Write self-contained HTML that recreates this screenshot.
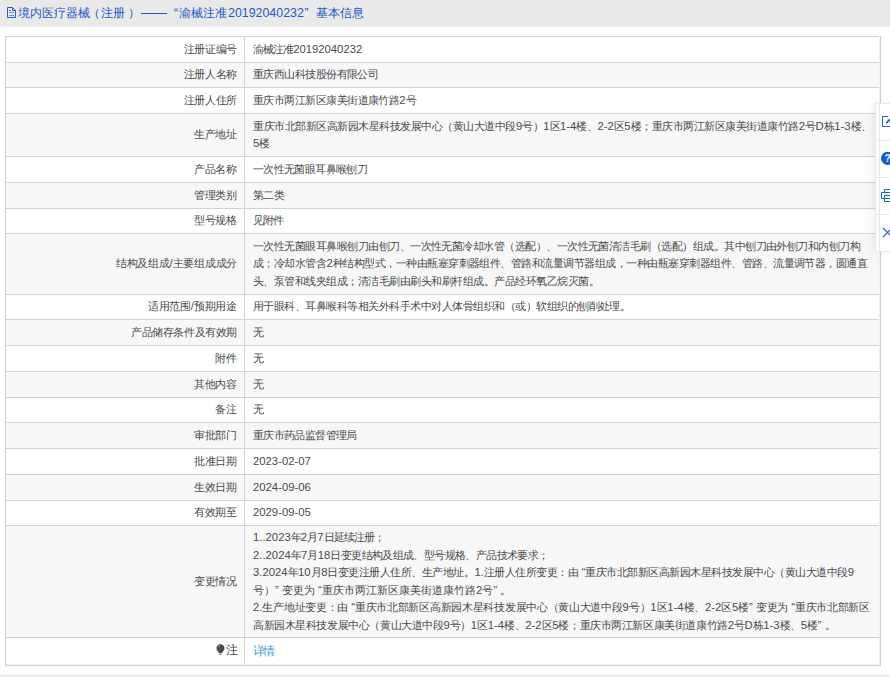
<!DOCTYPE html>
<html><head><meta charset="utf-8">
<style>
*{margin:0;padding:0;box-sizing:border-box}
html,body{width:890px;height:677px;overflow:hidden;background:#fff}
body{position:relative;font-family:"Liberation Sans",sans-serif;font-size:11px;color:#4a4a4a}
b{display:inline-block;width:var(--w);font-weight:normal;text-align:left;overflow:visible}
.hdr{position:absolute;left:0;top:0;width:890px;height:26px;background:#e9e9e9}
.hdr2{position:absolute;left:0;top:26px;width:890px;height:1px;background:#eceef6}
.ht{position:absolute;left:0;top:5px;height:16px;line-height:16px;font-size:12px;color:#1a58c8;white-space:nowrap;--w:12px}
.ht span{position:absolute;top:0}
.hi{position:absolute;left:0;top:0}
.tbl{position:absolute;left:5px;top:36px;width:876px;height:630px;border:1px solid #cfcfcf;border-top:0}
.r{position:absolute;left:0;width:873px;border-top:1px solid #d2d2d2;background:#fff}
.r.g{background:linear-gradient(to right,#fff 1px,#f7f7f7 1px)}
.l{position:absolute;left:0;top:0;width:239px;height:100%;border-right:1px solid #d2d2d2;display:flex;align-items:center;justify-content:flex-end;padding-right:7px;white-space:nowrap;line-height:17.5px}
.v{position:absolute;left:239px;top:0;width:640px;height:100%;display:flex;align-items:center;padding-left:8px;white-space:nowrap;line-height:17.5px}
.ln{display:block;white-space:nowrap;height:17.5px}
.a{font-size:11.3px}
.link{color:#3d94f6;font-size:12px}
.bulb{display:inline-block;margin-right:1px;vertical-align:0px}
.bar{position:absolute;left:0;top:675px;width:890px;height:2px;background:linear-gradient(#e8e8e8 1px,#efefef 1px)}
.tb{position:absolute;left:875px;top:103px;width:25px;height:149px;background:#fff;border:1px solid #e5e8f1;box-shadow:-4px 0 8px rgba(0,0,0,0.05)}
.tbs{position:absolute;left:860px;top:100px}
</style></head><body>
<div class="hdr"></div><div class="hdr2"></div>
<svg class="hi" width="24" height="24" viewBox="0 0 24 24"><g fill="none" stroke="#1f5fcc" stroke-width="1"><path d="M7.5 7.5H12.5L15.5 10.5V17.5H7.5Z"/><path d="M12.5 7.5V10.5H15.5"/><path d="M9 10.5H11" stroke="#3a6fd2"/><path d="M9 12.5H14M9 15.5H14" stroke="#7c8fd6"/></g></svg>
<div class="ht"><span id="H0" style="left:18px"><b>境</b><b>内</b><b>医</b><b>疗</b><b>器</b><b>械</b></span><span id="H1a" style="left:88px"><b>（</b></span><span id="H1b" style="left:101px"><b>注</b><b>册</b></span><span id="H1c" style="left:128px"><b>）</b></span><span id="H3a" style="left:174px">“</span><span id="H3b" style="left:179px"><b>渝</b><b>械</b><b>注</b><b>准</b></span><span id="H3c" style="left:228px;font-size:12.4px">20192040232</span><span id="H3d" style="left:304.5px">”</span><span id="H4" style="left:316px"><b>基</b><b>本</b><b>信</b><b>息</b></span></div><div style="position:absolute;left:141px;top:13px;width:26px;height:1px;background:#1a58c8"></div>
<div class="tbl">
<div class="r" style="top:0px;height:26px"><div class="l"><span class="lb" id="L0" style="--w:10.700px"><b>注</b><b>册</b><b>证</b><b>编</b><b>号</b></span></div><div class="v"><div><span class="ln" id="V0_0" style="--w:10.043px"><b>渝</b><b>械</b><b>注</b><b>准</b><span class="a">20192040232</span></span></div></div></div>
<div class="r g" style="top:26px;height:25px"><div class="l"><span class="lb" id="L1" style="--w:10.700px"><b>注</b><b>册</b><b>人</b><b>名</b><b>称</b></span></div><div class="v"><div><span class="ln" id="V1_0" style="--w:10.448px"><b>重</b><b>庆</b><b>西</b><b>山</b><b>科</b><b>技</b><b>股</b><b>份</b><b>有</b><b>限</b><b>公</b><b>司</b></span></div></div></div>
<div class="r" style="top:51px;height:26px"><div class="l"><span class="lb" id="L2" style="--w:10.700px"><b>注</b><b>册</b><b>人</b><b>住</b><b>所</b></span></div><div class="v"><div><span class="ln" id="V2_0" style="--w:10.459px"><b>重</b><b>庆</b><b>市</b><b>两</b><b>江</b><b>新</b><b>区</b><b>康</b><b>美</b><b>街</b><b>道</b><b>康</b><b>竹</b><b>路</b><span class="a">2</span><b>号</b></span></div></div></div>
<div class="r g" style="top:77px;height:43px"><div class="l"><span class="lb" id="L3" style="--w:10.843px"><b>生</b><b>产</b><b>地</b><b>址</b></span></div><div class="v"><div><span class="ln" id="V3_0" style="--w:10.516px"><b>重</b><b>庆</b><b>市</b><b>北</b><b>部</b><b>新</b><b>区</b><b>高</b><b>新</b><b>园</b><b>木</b><b>星</b><b>科</b><b>技</b><b>发</b><b>展</b><b>中</b><b>心</b><b>（</b><b>黄</b><b>山</b><b>大</b><b>道</b><b>中</b><b>段</b><span class="a">9</span><b>号</b><b>）</b><span class="a">1</span><b>区</b><span class="a">1-4</span><b>楼</b><b>、</b><span class="a">2-2</span><b>区</b><span class="a">5</span><b>楼</b><b>；</b><b>重</b><b>庆</b><b>市</b><b>两</b><b>江</b><b>新</b><b>区</b><b>康</b><b>美</b><b>街</b><b>道</b><b>康</b><b>竹</b><b>路</b><span class="a">2</span><b>号</b><span class="a">D</span><b>栋</b><span class="a">1-3</span><b>楼</b><b>、</b></span><span class="ln" id="V3_1" style="--w:16.100px"><span class="a">5</span><b>楼</b></span></div></div></div>
<div class="r" style="top:120px;height:26px"><div class="l"><span class="lb" id="L4" style="--w:10.843px"><b>产</b><b>品</b><b>名</b><b>称</b></span></div><div class="v"><div><span class="ln" id="V4_0" style="--w:10.367px"><b>一</b><b>次</b><b>性</b><b>无</b><b>菌</b><b>眼</b><b>耳</b><b>鼻</b><b>喉</b><b>刨</b><b>刀</b></span></div></div></div>
<div class="r g" style="top:146px;height:26px"><div class="l"><span class="lb" id="L5" style="--w:10.843px"><b>管</b><b>理</b><b>类</b><b>别</b></span></div><div class="v"><div><span class="ln" id="V5_0" style="--w:10.260px"><b>第</b><b>二</b><b>类</b></span></div></div></div>
<div class="r" style="top:172px;height:25px"><div class="l"><span class="lb" id="L6" style="--w:10.843px"><b>型</b><b>号</b><b>规</b><b>格</b></span></div><div class="v"><div><span class="ln" id="V6_0" style="--w:10.020px"><b>见</b><b>附</b><b>件</b></span></div></div></div>
<div class="r g" style="top:197px;height:61px"><div class="l"><span class="lb" id="L7" style="--w:10.748px"><b>结</b><b>构</b><b>及</b><b>组</b><b>成</b><span class="a">/</span><b>主</b><b>要</b><b>组</b><b>成</b><b>成</b><b>分</b></span></div><div class="v"><div><span class="ln" id="V7_0" style="--w:10.476px"><b>一</b><b>次</b><b>性</b><b>无</b><b>菌</b><b>眼</b><b>耳</b><b>鼻</b><b>喉</b><b>刨</b><b>刀</b><b>由</b><b>刨</b><b>刀</b><b>、</b><b>一</b><b>次</b><b>性</b><b>无</b><b>菌</b><b>冷</b><b>却</b><b>水</b><b>管</b><b>（</b><b>选</b><b>配</b><b>）</b><b>、</b><b>一</b><b>次</b><b>性</b><b>无</b><b>菌</b><b>清</b><b>洁</b><b>毛</b><b>刷</b><b>（</b><b>选</b><b>配</b><b>）</b><b>组</b><b>成</b><b>。</b><b>其</b><b>中</b><b>刨</b><b>刀</b><b>由</b><b>外</b><b>刨</b><b>刀</b><b>和</b><b>内</b><b>刨</b><b>刀</b><b>构</b></span><span class="ln" id="V7_1" style="--w:10.490px"><b>成</b><b>；</b><b>冷</b><b>却</b><b>水</b><b>管</b><b>含</b><span class="a">2</span><b>种</b><b>结</b><b>构</b><b>型</b><b>式</b><b>，</b><b>一</b><b>种</b><b>由</b><b>瓶</b><b>塞</b><b>穿</b><b>刺</b><b>器</b><b>组</b><b>件</b><b>、</b><b>管</b><b>路</b><b>和</b><b>流</b><b>量</b><b>调</b><b>节</b><b>器</b><b>组</b><b>成</b><b>，</b><b>一</b><b>种</b><b>由</b><b>瓶</b><b>塞</b><b>穿</b><b>刺</b><b>器</b><b>组</b><b>件</b><b>、</b><b>管</b><b>路</b><b>、</b><b>流</b><b>量</b><b>调</b><b>节</b><b>器</b><b>，</b><b>圆</b><b>通</b><b>直</b></span><span class="ln" id="V7_2" style="--w:10.488px"><b>头</b><b>、</b><b>泵</b><b>管</b><b>和</b><b>线</b><b>夹</b><b>组</b><b>成</b><b>；</b><b>清</b><b>洁</b><b>毛</b><b>刷</b><b>由</b><b>刷</b><b>头</b><b>和</b><b>刷</b><b>杆</b><b>组</b><b>成</b><b>。</b><b>产</b><b>品</b><b>经</b><b>环</b><b>氧</b><b>乙</b><b>烷</b><b>灭</b><b>菌</b><b>。</b></span></div></div></div>
<div class="r" style="top:258px;height:25px"><div class="l"><span class="lb" id="L8" style="--w:10.767px"><b>适</b><b>用</b><b>范</b><b>围</b><span class="a">/</span><b>预</b><b>期</b><b>用</b><b>途</b></span></div><div class="v"><div><span class="ln" id="V8_0" style="--w:10.489px"><b>用</b><b>于</b><b>眼</b><b>科</b><b>、</b><b>耳</b><b>鼻</b><b>喉</b><b>科</b><b>等</b><b>相</b><b>关</b><b>外</b><b>科</b><b>手</b><b>术</b><b>中</b><b>对</b><b>人</b><b>体</b><b>骨</b><b>组</b><b>织</b><b>和</b><b>（</b><b>或</b><b>）</b><b>软</b><b>组</b><b>织</b><b>的</b><b>刨</b><b>削</b><b>处</b><b>理</b><b>。</b></span></div></div></div>
<div class="r g" style="top:283px;height:26px"><div class="l"><span class="lb" id="L9" style="--w:10.605px"><b>产</b><b>品</b><b>储</b><b>存</b><b>条</b><b>件</b><b>及</b><b>有</b><b>效</b><b>期</b></span></div><div class="v"><div><span class="ln" id="V9_0" style="--w:10.500px"><b>无</b></span></div></div></div>
<div class="r" style="top:309px;height:26px"><div class="l"><span class="lb" id="L10" style="--w:11.033px"><b>附</b><b>件</b></span></div><div class="v"><div><span class="ln" id="V10_0" style="--w:10.500px"><b>无</b></span></div></div></div>
<div class="r g" style="top:335px;height:26px"><div class="l"><span class="lb" id="L11" style="--w:10.843px"><b>其</b><b>他</b><b>内</b><b>容</b></span></div><div class="v"><div><span class="ln" id="V11_0" style="--w:10.500px"><b>无</b></span></div></div></div>
<div class="r" style="top:361px;height:25px"><div class="l"><span class="lb" id="L12" style="--w:11.033px"><b>备</b><b>注</b></span></div><div class="v"><div><span class="ln" id="V12_0" style="--w:10.500px"><b>无</b></span></div></div></div>
<div class="r g" style="top:386px;height:26px"><div class="l"><span class="lb" id="L13" style="--w:10.843px"><b>审</b><b>批</b><b>部</b><b>门</b></span></div><div class="v"><div><span class="ln" id="V13_0" style="--w:10.374px"><b>重</b><b>庆</b><b>市</b><b>药</b><b>品</b><b>监</b><b>督</b><b>管</b><b>理</b><b>局</b></span></div></div></div>
<div class="r" style="top:412px;height:26px"><div class="l"><span class="lb" id="L14" style="--w:10.843px"><b>批</b><b>准</b><b>日</b><b>期</b></span></div><div class="v"><div><span class="ln" id="V14_0" style="--w:10.500px"><span class="a">2023-02-07</span></span></div></div></div>
<div class="r g" style="top:438px;height:26px"><div class="l"><span class="lb" id="L15" style="--w:10.843px"><b>生</b><b>效</b><b>日</b><b>期</b></span></div><div class="v"><div><span class="ln" id="V15_0" style="--w:10.500px"><span class="a">2024-09-06</span></span></div></div></div>
<div class="r" style="top:464px;height:25px"><div class="l"><span class="lb" id="L16" style="--w:10.843px"><b>有</b><b>效</b><b>期</b><b>至</b></span></div><div class="v"><div><span class="ln" id="V16_0" style="--w:10.500px"><span class="a">2029-09-05</span></span></div></div></div>
<div class="r g" style="top:489px;height:112px"><div class="l"><span class="lb" id="L17" style="--w:10.843px"><b>变</b><b>更</b><b>情</b><b>况</b></span></div><div class="v"><div><span class="ln" id="V17_0" style="--w:10.127px"><span class="a">1..2023</span><b>年</b><span class="a">2</span><b>月</b><span class="a">7</span><b>日</b><b>延</b><b>续</b><b>注</b><b>册</b><b>；</b></span><span class="ln" id="V17_1" style="--w:10.402px"><span class="a">2..2024</span><b>年</b><span class="a">7</span><b>月</b><span class="a">18</span><b>日</b><b>变</b><b>更</b><b>结</b><b>构</b><b>及</b><b>组</b><b>成</b><b>、</b><b>型</b><b>号</b><b>规</b><b>格</b><b>、</b><b>产</b><b>品</b><b>技</b><b>术</b><b>要</b><b>求</b><b>；</b></span><span class="ln" id="V17_2" style="--w:10.504px"><span class="a">3.2024</span><b>年</b><span class="a">10</span><b>月</b><span class="a">8</span><b>日</b><b>变</b><b>更</b><b>注</b><b>册</b><b>人</b><b>住</b><b>所</b><b>、</b><b>生</b><b>产</b><b>地</b><b>址</b><b>。</b><span class="a">1.</span><b>注</b><b>册</b><b>人</b><b>住</b><b>所</b><b>变</b><b>更</b><b>：</b><b>由</b><span class="a"> “</span><b>重</b><b>庆</b><b>市</b><b>北</b><b>部</b><b>新</b><b>区</b><b>高</b><b>新</b><b>园</b><b>木</b><b>星</b><b>科</b><b>技</b><b>发</b><b>展</b><b>中</b><b>心</b><b>（</b><b>黄</b><b>山</b><b>大</b><b>道</b><b>中</b><b>段</b><span class="a">9</span></span><span class="ln" id="V17_3" style="--w:11.017px"><b>号</b><b>）</b><span class="a">” </span><b>变</b><b>更</b><b>为</b><span class="a"> “</span><b>重</b><b>庆</b><b>市</b><b>两</b><b>江</b><b>新</b><b>区</b><b>康</b><b>美</b><b>街</b><b>道</b><b>康</b><b>竹</b><b>路</b><span class="a">2</span><b>号</b><span class="a">” </span><b>。</b></span><span class="ln" id="V17_4" style="--w:10.710px"><span class="a">2.</span><b>生</b><b>产</b><b>地</b><b>址</b><b>变</b><b>更</b><b>：</b><b>由</b><span class="a"> “</span><b>重</b><b>庆</b><b>市</b><b>北</b><b>部</b><b>新</b><b>区</b><b>高</b><b>新</b><b>园</b><b>木</b><b>星</b><b>科</b><b>技</b><b>发</b><b>展</b><b>中</b><b>心</b><b>（</b><b>黄</b><b>山</b><b>大</b><b>道</b><b>中</b><b>段</b><span class="a">9</span><b>号</b><b>）</b><span class="a">1</span><b>区</b><span class="a">1-4</span><b>楼</b><b>、</b><span class="a">2-2</span><b>区</b><span class="a">5</span><b>楼</b><span class="a">” </span><b>变</b><b>更</b><b>为</b><span class="a"> “</span><b>重</b><b>庆</b><b>市</b><b>北</b><b>部</b><b>新</b><b>区</b></span><span class="ln" id="V17_5" style="--w:10.584px"><b>高</b><b>新</b><b>园</b><b>木</b><b>星</b><b>科</b><b>技</b><b>发</b><b>展</b><b>中</b><b>心</b><b>（</b><b>黄</b><b>山</b><b>大</b><b>道</b><b>中</b><b>段</b><span class="a">9</span><b>号</b><b>）</b><span class="a">1</span><b>区</b><span class="a">1-4</span><b>楼</b><b>、</b><span class="a">2-2</span><b>区</b><span class="a">5</span><b>楼</b><b>；</b><b>重</b><b>庆</b><b>市</b><b>两</b><b>江</b><b>新</b><b>区</b><b>康</b><b>美</b><b>街</b><b>道</b><b>康</b><b>竹</b><b>路</b><span class="a">2</span><b>号</b><span class="a">D</span><b>栋</b><span class="a">1-3</span><b>楼</b><b>、</b><span class="a">5</span><b>楼</b><span class="a">” </span><b>。</b></span></div></div></div>
<div class="r" style="top:601px;height:28px"><div class="l"><span class="bulb"><svg width="9" height="11" viewBox="0 0 9 11"><path d="M4.5 0.3C2.2 0.3 0.5 2 0.5 4.2c0 1.5 0.8 2.5 1.6 3.3.5.5.7 1 .7 1.6h3.4c0-.6.2-1.1.7-1.6.8-.8 1.6-1.8 1.6-3.3C8.5 2 6.8.3 4.5.3z" fill="#4a4a4a"/><path d="M2.3 3.6C2.5 2.6 3.2 2 4 1.8" fill="none" stroke="#9ab" stroke-width="0.8"/><rect x="2.9" y="9.6" width="3.2" height="1.2" rx=".5" fill="#888"/></svg></span><span class="lb" style="--w:11.5px;font-size:12px;position:relative;top:-1px"><b>注</b></span></div><div class="v"><div><span class="ln link" style="--w:10px;margin-left:-0.5px"><b>详</b><b>情</b></span></div></div></div>
</div>
<div style="position:absolute;left:6px;top:664px;width:874px;height:1px;background:#eef0f6"></div><div style="position:absolute;left:879px;top:37px;width:1px;height:628px;background:#eef0f7"></div><div class="bar"></div>
<div class="tb"></div>
<svg class="tbs" width="30" height="160" viewBox="860 100 30 160">
<g fill="none" stroke="#e5e8f1" stroke-width="1">
<path d="M879.5 104V251"/><path d="M876 140.5H890M876 177.5H890M876 214.5H890"/>
</g>
<g fill="none" stroke="#1a5fd0" stroke-width="1">
<path d="M888 116.5H882.5V126.5H891"/>
<path d="M886.2 123.2L892 117.4" stroke-width="1.8"/>
<path d="M884.5 192V189.5H892M881.5 192.5H892V198.5H881.5Z M884.5 195.5H892V201.5H884.5Z" fill="#fff"/>
<path d="M883 228L892 237M883 237L892 228" stroke-width="1.1"/>
</g>
<circle cx="887.6" cy="158.3" r="6.6" fill="#105bcf"/>
<text x="887.6" y="162.3" font-family="Liberation Sans" font-weight="bold" font-size="10" fill="#fff" text-anchor="middle">?</text>
</svg>
</body></html>
